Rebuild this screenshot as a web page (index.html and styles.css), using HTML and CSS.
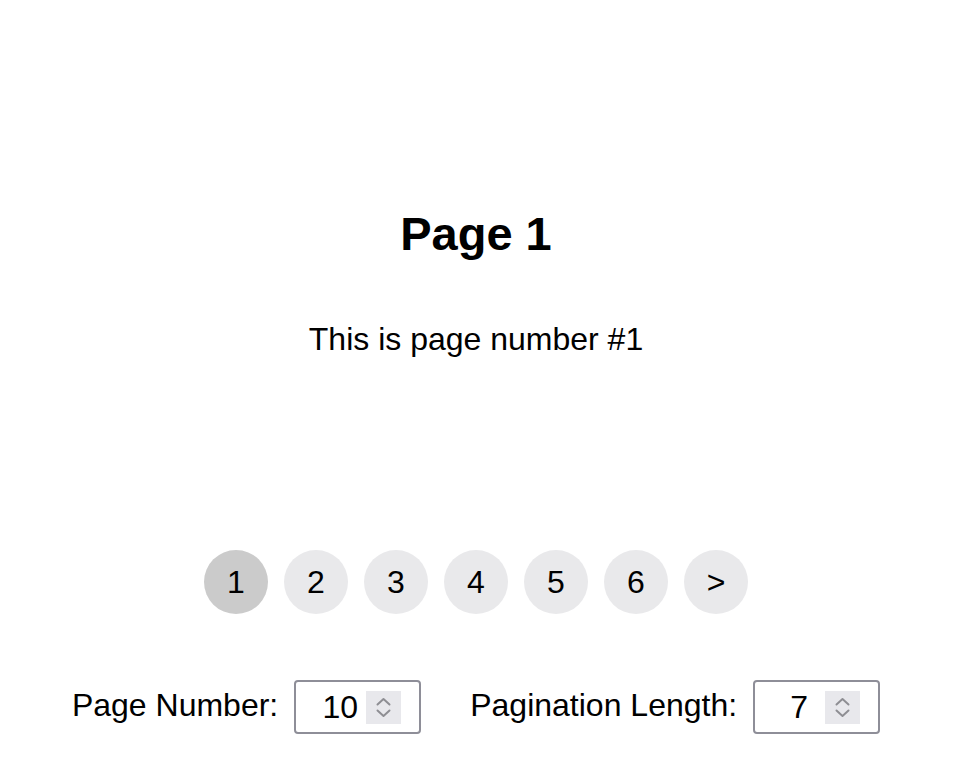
FILE: index.html
```html
<!DOCTYPE html>
<html>
<head>
<meta charset="utf-8">
<link rel="stylesheet" href="styles.css">
</head>
<body>
<div class="app">
  <h1 class="title">Page 1</h1>
  <p class="text">This is page number #1</p>
  <nav class="pagination">
    <button class="page active">1</button>
    <button class="page">2</button>
    <button class="page">3</button>
    <button class="page">4</button>
    <button class="page">5</button>
    <button class="page">6</button>
    <button class="page">&gt;</button>
  </nav>
  <div class="controls">
    <label class="field">
      <span class="label">Page Number:</span>
      <span class="numbox">
        <input class="num" type="text" value="10">
        <span class="spin">
          <svg width="35" height="33" viewBox="0 0 35 33"><path d="M11.5 13.5 L17.5 8 L23.5 13.5" fill="none" stroke="#8e8e93" stroke-width="2" stroke-linecap="round" stroke-linejoin="round"/><path d="M11.5 19.5 L17.5 25 L23.5 19.5" fill="none" stroke="#8e8e93" stroke-width="2" stroke-linecap="round" stroke-linejoin="round"/></svg>
        </span>
      </span>
    </label>
    <label class="field">
      <span class="label">Pagination Length:</span>
      <span class="numbox">
        <input class="num" type="text" value="7">
        <span class="spin">
          <svg width="35" height="33" viewBox="0 0 35 33"><path d="M11.5 13.5 L17.5 8 L23.5 13.5" fill="none" stroke="#8e8e93" stroke-width="2" stroke-linecap="round" stroke-linejoin="round"/><path d="M11.5 19.5 L17.5 25 L23.5 19.5" fill="none" stroke="#8e8e93" stroke-width="2" stroke-linecap="round" stroke-linejoin="round"/></svg>
        </span>
      </span>
    </label>
  </div>
</div>
</body>
</html>
```

FILE: styles.css
```css
html, body {
  margin: 0;
  padding: 0;
  background: #ffffff;
}

body {
  font-family: "Liberation Sans", Arial, sans-serif;
  color: #000000;
}

.app {
  width: 952px;
  display: flex;
  flex-direction: column;
  align-items: center;
  padding-top: 207px;
}

.title {
  margin: 0;
  font-size: 47px;
  line-height: 54px;
  font-weight: bold;
}

.text {
  margin: 60px 0 0;
  font-size: 32px;
  line-height: 37px;
}

.pagination {
  margin-top: 192px;
  display: flex;
  gap: 16px;
}

.page {
  width: 64px;
  height: 64px;
  border: none;
  border-radius: 50%;
  background: #e9e9eb;
  color: #000000;
  font-family: "Liberation Sans", Arial, sans-serif;
  font-size: 32px;
  line-height: 64px;
  padding: 0;
  text-align: center;
}

.page.active {
  background: #cbcbcb;
}

.controls {
  margin-top: 66px;
  display: flex;
  gap: 49px;
}

.field {
  display: flex;
  align-items: center;
  gap: 16px;
}

.label {
  font-size: 32px;
  line-height: 37px;
  padding-bottom: 3px;
}

.numbox {
  display: flex;
  align-items: center;
  box-sizing: border-box;
  width: 127px;
  height: 54px;
  border: 2px solid #8e8e98;
  border-radius: 4px;
  padding: 0 18px;
}

.num {
  width: 52px;
  border: none;
  outline: none;
  padding: 0;
  margin: 0;
  background: transparent;
  font-family: "Liberation Sans", Arial, sans-serif;
  font-size: 32px;
  line-height: 37px;
  text-align: center;
  color: #000000;
}

.spin {
  display: block;
  width: 35px;
  height: 33px;
  background: #e8e8ec;
}

.spin svg {
  display: block;
}
```
